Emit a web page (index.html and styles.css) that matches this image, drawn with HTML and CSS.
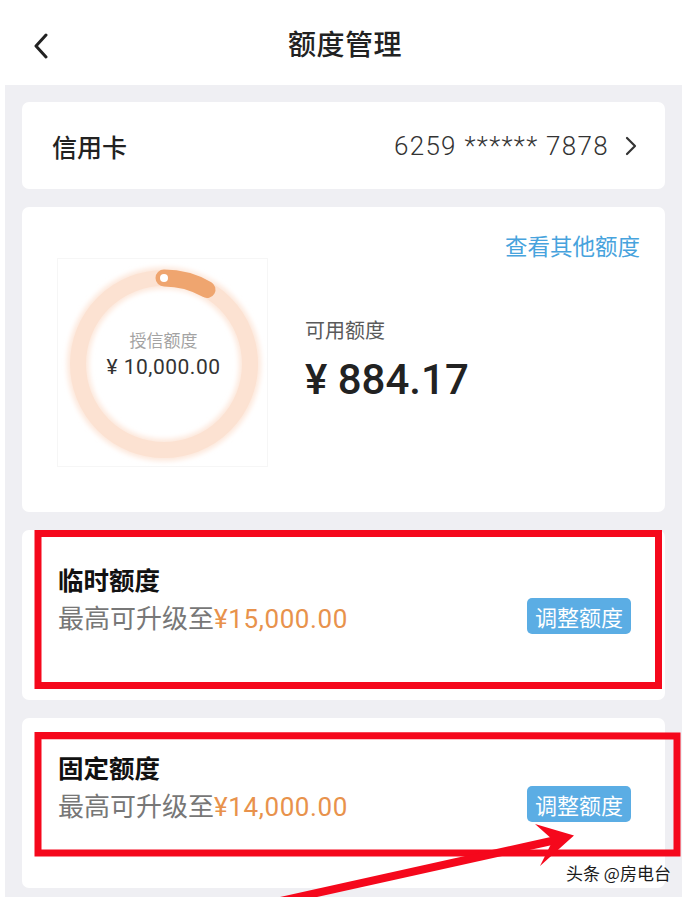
FILE: index.html
```html
<!DOCTYPE html>
<html lang="zh">
<head>
<meta charset="utf-8">
<title>额度管理</title>
<link rel="stylesheet" href="styles.css">
</head>
<body>
<header class="topbar">
  <svg class="back" width="16" height="26" viewBox="0 0 16 26"><polyline points="13,2 3,13 13,24" fill="none" stroke="#222" stroke-width="3" stroke-linecap="round" stroke-linejoin="round"/></svg>
  <h1 class="title">额度管理</h1>
</header>
<main class="content">
  <section class="card card-account">
    <span class="account-label">信用卡</span>
    <span class="account-no"><span class="acct-digits">6259 ****** 7878</span>
      <svg class="chev" width="12" height="20" viewBox="0 0 12 20"><polyline points="2,2 10,10 2,18" fill="none" stroke="#333" stroke-width="2.2" stroke-linecap="round" stroke-linejoin="round"/></svg>
    </span>
  </section>

  <section class="card card-limit">
    <div class="link-row"><a class="link">查看其他额度</a></div>
    <div class="limit-row">
      <div class="ring-box">
        <svg class="ring" width="211" height="209" viewBox="0 0 211 209">
          <defs>
            <filter id="soft" x="-20%" y="-20%" width="140%" height="140%"><feGaussianBlur stdDeviation="2.5"/></filter>
          </defs>
          <circle cx="106" cy="105" r="86" fill="none" stroke="#fde8dc" stroke-width="22" filter="url(#soft)"/>
          <circle cx="106" cy="105" r="86" fill="none" stroke="#fce2d2" stroke-width="16"/>
          <path d="M106 19 A86 86 0 0 1 149 30.5" fill="none" stroke="#efa56f" stroke-width="17" stroke-linecap="round"/>
          <circle cx="106" cy="19" r="4" fill="#fff"/>
        </svg>
        <div class="ring-text">
          <span class="ring-label">授信额度</span>
          <span class="ring-value">¥ 10,000.00</span>
        </div>
      </div>
      <div class="avail">
        <span class="avail-label">可用额度</span>
        <span class="avail-value">¥ 884.17</span>
      </div>
    </div>
  </section>

  <section class="card card-adjust">
    <h2 class="adj-title">临时额度</h2>
    <div class="adj-row">
      <p class="adj-desc">最高可升级至<span class="amt">¥15,000.00</span></p>
      <button class="adj-btn">调整额度</button>
    </div>
  </section>

  <section class="card card-adjust">
    <h2 class="adj-title">固定额度</h2>
    <div class="adj-row">
      <p class="adj-desc">最高可升级至<span class="amt">¥14,000.00</span></p>
      <button class="adj-btn">调整额度</button>
    </div>
  </section>
</main>

<svg class="annot" width="690" height="897" viewBox="0 0 690 897">
  <rect x="38" y="533.5" width="620.5" height="152" fill="none" stroke="#f5081c" stroke-width="7"/>
  <path d="M38 735.5 L677 736 L677 853 L38 853 Z" fill="none" stroke="#f5081c" stroke-width="7"/>
  <line x1="276" y1="902" x2="556" y2="840" stroke="#f5081c" stroke-width="8"/>
  <polygon points="574,835.5 535,824 553,840 540,866" fill="#f5081c"/>
</svg>
<div class="watermark">头条 @房电台</div>
</body>
</html>
```

FILE: styles.css
```css
* { box-sizing: border-box; }
html, body {
  margin: 0;
  padding: 0;
  background: #fff;
  width: 690px;
  height: 897px;
  overflow: hidden;
  font-family: Roboto, "Noto Sans CJK SC", sans-serif;
  color: #222;
}
body { position: relative; }

.topbar {
  height: 85px;
  display: flex;
  align-items: center;
  justify-content: center;
  position: relative;
}
.back {
  position: absolute;
  left: 33px;
  top: 33px;
}
.title {
  margin: 0;
  font-size: 28px;
  font-weight: 500;
  font-family: "Noto Sans CJK SC", sans-serif;
  color: #222;
  letter-spacing: 0.5px;
}

.content {
  margin: 0 8px 0 5px;
  background: #efeff3;
  padding: 17px 17px 0 17px;
  height: 812px;
  display: flex;
  flex-direction: column;
  gap: 18px;
}
.card {
  background: #fff;
  border-radius: 7px;
}

.card-account {
  height: 87px;
  display: flex;
  align-items: center;
  justify-content: space-between;
  padding: 0 28px 0 30px;
}
.account-label {
  font-family: "Noto Sans CJK SC", sans-serif;
  font-size: 25px;
  font-weight: 500;
  color: #222;
}
.account-no {
  display: flex;
  align-items: center;
  gap: 16px;
}
.acct-digits {
  font-size: 26px;
  font-weight: 300;
  letter-spacing: 1.3px;
  color: #333;
}

.card-limit {
  height: 305px;
  padding-top: 24px;
}
.link-row {
  display: flex;
  justify-content: flex-end;
  padding-right: 25px;
}
.link {
  font-family: "Noto Sans CJK SC", sans-serif;
  font-size: 22.5px;
  line-height: 28px;
  color: #47a3dd;
}
.limit-row {
  display: flex;
  margin-top: -1px;
  padding-left: 35px;
}
.ring-box {
  width: 211px;
  height: 209px;
  display: grid;
  border: 1px solid #f6f6f6;
}
.ring, .ring-text { grid-area: 1 / 1; }
.ring-text {
  display: flex;
  flex-direction: column;
  align-items: center;
  padding-top: 69px;
}
.ring-label {
  font-family: "Noto Sans CJK SC", sans-serif;
  font-size: 17px;
  line-height: 24px;
  color: #a3a3a3;
}
.ring-value {
  font-size: 21px;
  line-height: 28px;
  margin-top: 1px;
  letter-spacing: 0.5px;
  color: #333;
}
.avail {
  display: flex;
  flex-direction: column;
  padding-top: 58px;
  margin-left: 37px;
}
.avail-label {
  font-family: "Noto Sans CJK SC", sans-serif;
  font-size: 20px;
  line-height: 28px;
  color: #5a5a5a;
}
.avail-value {
  font-size: 42px;
  line-height: 50px;
  margin-top: 11px;
  font-weight: 500;
  color: #222;
}

.card-adjust {
  height: 170px;
  padding: 33px 34px 0 36px;
}
.adj-title {
  margin: 0;
  font-family: "Noto Sans CJK SC", sans-serif;
  font-size: 25.5px;
  line-height: 32px;
  font-weight: 700;
  color: #111;
}
.adj-row {
  display: flex;
  align-items: center;
  justify-content: space-between;
  height: 42px;
}
.adj-desc {
  margin: 0;
  font-family: "Noto Sans CJK SC", sans-serif;
  font-size: 26px;
  color: #777;
}
.amt {
  font-family: Roboto, sans-serif;
  color: #e8924c;
  font-size: 26px;
  letter-spacing: 0.6px;
}
.adj-btn {
  width: 104px;
  height: 36px;
  border: none;
  border-radius: 5px;
  background: #5badE4;
  color: #fff;
  font-family: "Noto Sans CJK SC", sans-serif;
  font-size: 22px;
  padding: 0;
  line-height: 36px;
}

.annot {
  position: absolute;
  left: 0;
  top: 0;
  pointer-events: none;
}
.watermark {
  position: absolute;
  left: 566px;
  top: 861px;
  font-family: "Noto Sans CJK SC", sans-serif;
  font-size: 17px;
  line-height: 24px;
  color: #1a1a1a;
  text-shadow: 0 0 2px #fff, 0 0 2px #fff;
}
```
